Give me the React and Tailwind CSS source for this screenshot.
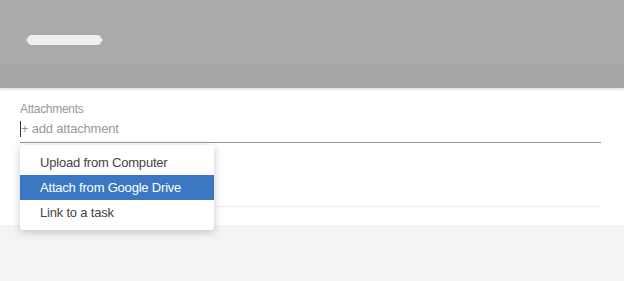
export default function App() {
  return (
    <div className="h-[281px] w-[624px] overflow-hidden bg-[#f4f4f4] font-['Liberation_Sans',Arial,sans-serif]">
      {/* Header */}
      <div className="relative z-10 shadow-[0_1px_3px_rgba(0,0,0,0.18)]">
        <div className="h-[64px] bg-[#aaaaaa] pl-[26px] pt-[35px]">
          <div className="h-[10px] w-[77px] rounded-[4px] bg-[#eeeeee] [clip-path:polygon(4px_0,calc(100%-4px)_0,100%_50%,calc(100%-4px)_100%,4px_100%,0_50%)]" />
        </div>
        <div className="h-[24px] bg-[#a7a7a7]" />
      </div>

      {/* Form */}
      <div className="h-[137px] bg-white px-[20px] pt-[14px]">
        <div className="text-[12px] leading-[14px] tracking-[-0.3px] text-[#999]">Attachments</div>
        <div className="relative mr-[3px] mt-[4px] border-b border-[#9a9a9a] pb-[4px]">
          <div className="flex items-center text-[13px] leading-[18px] tracking-[-0.2px] text-[#9a9a9a]">
            <span className="mr-[0px] inline-block h-[16px] w-px bg-[#333]" />
            <span>+ add attachment</span>
          </div>

          {/* Menu */}
          <div className="absolute left-0 top-[calc(100%+3px)] z-20 w-[194px] rounded-[3px] bg-white py-[5px] text-[13px] tracking-[-0.2px] text-[#444] shadow-[0_2px_8px_rgba(0,0,0,0.22)]">
            <div className="flex h-[25px] items-center pl-[20px]">Upload from Computer</div>
            <div className="flex h-[25px] items-center bg-[#3b77c2] pl-[20px] text-white">Attach from Google Drive</div>
            <div className="flex h-[25px] items-center pl-[20px]">Link to a task</div>
          </div>
        </div>
        <div className="mr-[4px] mt-[63px] border-b border-[#eeeeee]" />
      </div>
    </div>
  );
}
